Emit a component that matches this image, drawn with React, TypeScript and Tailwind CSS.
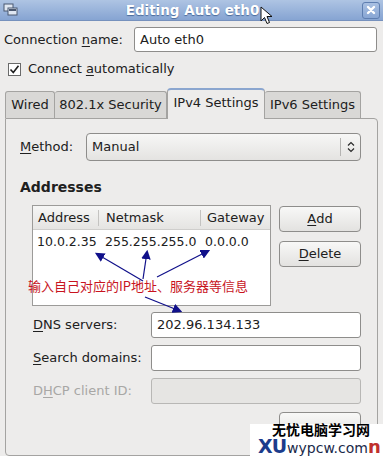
import React from "react";

const font = { fontFamily: '"DejaVu Sans", "Noto Sans CJK SC", sans-serif' };

function Input({ value, disabled }: { value?: string; disabled?: boolean }) {
  return (
    <div
      className={
        "h-full w-full rounded-[3px] border px-[5px] flex items-center " +
        (disabled ? "bg-[#e6e5e3] border-[#b8b7b5]" : "bg-white border-[#8e8d8b]")
      }
    >
      {value}
    </div>
  );
}

function U({ children }: { children: React.ReactNode }) {
  return <span className="underline underline-offset-2">{children}</span>;
}

export default function App() {
  return (
    <div
      className="relative w-[383px] h-[456px] overflow-hidden bg-[#edeceb] text-[13px] text-[#202020]"
      style={font}
    >
      {/* title bar */}
      <div className="h-[21px] flex items-center bg-gradient-to-b from-[#aec4e3] to-[#86a4d2] border-b border-[#7691bd] px-[3px]">
        <svg width="16" height="14" viewBox="0 0 16 14">
          <rect x="1" y="1" width="9" height="7" fill="#dfe7f2" stroke="#4a5870" />
          <rect x="5" y="5" width="9" height="7" fill="#dfe7f2" stroke="#4a5870" />
          <rect x="6" y="6" width="7" height="2" fill="#4a5870" />
        </svg>
        <div className="flex-1 text-center text-white font-bold text-[13.5px] [text-shadow:0_1px_1px_#4a6a9a] pl-[4px]">
          Editing Auto eth0
        </div>
        <div className="w-[18px] h-[17px] rounded-[3px] border border-[#5e7eb0] bg-gradient-to-b from-[#a9c0e2] to-[#88a6d4] flex items-center justify-center">
          <svg width="10" height="10" viewBox="0 0 10 10">
            <path d="M2 2 L8 8 M8 2 L2 8" stroke="white" strokeWidth="2.4" strokeLinecap="round" />
          </svg>
        </div>
      </div>

      {/* mouse pointer */}
      <svg className="absolute left-[260px] top-[6px]" width="14" height="20" viewBox="0 0 14 20">
        <path d="M1 1 L1 15 L4.5 11.5 L7 17.5 L9.5 16.5 L7 10.5 L12 10.5 Z" fill="white" stroke="#111" strokeWidth="1" strokeLinejoin="round" />
      </svg>

      <div className="px-[4px]">
        {/* connection name */}
        <div className="flex items-center mt-[6px] h-[25px]">
          <span className="w-[130px]">
            Connection <U>n</U>ame:
          </span>
          <div className="w-[243px] h-[25px]">
            <Input value="Auto eth0" />
          </div>
        </div>

        {/* connect automatically */}
        <div className="flex items-center mt-[9px] pl-[4px] gap-[7px] h-[16px]">
          <div className="w-[13px] h-[13px] border border-[#6a6a6a] bg-white flex items-center justify-center">
            <svg width="11" height="11" viewBox="0 0 11 11">
              <path d="M1.5 5.5 L4.3 8.6 L9.5 1.8" stroke="#1e1e1e" strokeWidth="1.6" fill="none" />
            </svg>
          </div>
          <span>
            Connect <U>a</U>utomatically
          </span>
        </div>

        {/* tabs */}
        <div className="flex items-end mt-[10px] pl-[1px] h-[31px]">
          <div className="w-[50px] h-[27px] bg-[#d9d8d6] border border-b-0 border-[#a4a3a1] rounded-t-[3px] flex items-center justify-center">
            Wired
          </div>
          <div className="w-[112px] h-[27px] bg-[#d9d8d6] border border-b-0 border-l-0 border-[#a4a3a1] rounded-t-[3px] flex items-center justify-center">
            802.1x Security
          </div>
          <div className="relative z-10 w-[98px] h-[31px] bg-[#edeceb] border border-b-0 border-[#a4a3a1] border-t-[#8ba6cf] border-t-2 rounded-t-[4px] flex items-center justify-center -mb-px pb-[3px]">
            IPv4 Settings
          </div>
          <div className="w-[96px] h-[27px] bg-[#d9d8d6] border border-b-0 border-l-0 border-[#a4a3a1] rounded-t-[3px] flex items-center justify-center">
            IPv6 Settings
          </div>
        </div>

        {/* panel */}
        <div className="relative ml-[1px] w-[373px] h-[338px] border border-[#a4a3a1] rounded-b-[4px] rounded-tr-[4px] pl-[14px] pr-[16px]">
          {/* method */}
          <div className="flex items-center mt-[14px] h-[28px]">
            <span className="w-[66px]">
              <U>M</U>ethod:
            </span>
            <div className="flex-1 h-[28px] rounded-[4px] border border-[#8e8d8b] bg-gradient-to-b from-[#f7f7f6] to-[#e4e3e1] flex items-center">
              <span className="flex-1 pl-[5px]">Manual</span>
              <div className="w-px h-[18px] bg-[#b5b4b2]" />
              <div className="w-[19px] flex justify-center">
                <svg width="8" height="12" viewBox="0 0 8 12">
                  <path d="M1 4.5 L4 1.5 L7 4.5 M1 7.5 L4 10.5 L7 7.5" stroke="#2a2a2a" strokeWidth="1.2" fill="none" />
                </svg>
              </div>
            </div>
          </div>

          {/* addresses */}
          <div className="mt-[18px] font-bold text-[14px] leading-[17px]">Addresses</div>
          <div className="flex mt-[9px] pl-[12px] gap-[8px]">
            <div className="w-[239px] h-[101px] border border-[#9c9b99] bg-white">
              <div className="flex h-[24px] items-center bg-gradient-to-b from-[#f6f6f5] to-[#e5e4e2] border-b border-[#cfcecc]">
                <div className="w-[65px] pl-[5px]">Address</div>
                <div className="w-px h-[16px] bg-[#c4c3c1]" />
                <div className="w-[101px] pl-[7px]">Netmask</div>
                <div className="w-px h-[16px] bg-[#c4c3c1]" />
                <div className="flex-1 pl-[6px]">Gateway</div>
              </div>
              <div className="flex mt-[3px] text-[12.5px] whitespace-nowrap">
                <div className="w-[72px] pl-[4px]">10.0.2.35</div>
                <div className="w-[100px]">255.255.255.0</div>
                <div>0.0.0.0</div>
              </div>
            </div>
            <div className="flex flex-col gap-[9px] pt-[1px]">
              <div className="w-[82px] h-[26px] rounded-[4px] border border-[#8e8d8b] bg-gradient-to-b from-[#f8f8f7] to-[#e3e2e0] flex items-center justify-center">
                <U>A</U>dd
              </div>
              <div className="w-[82px] h-[26px] rounded-[4px] border border-[#8e8d8b] bg-gradient-to-b from-[#f8f8f7] to-[#e3e2e0] flex items-center justify-center">
                <span>
                  <U>D</U>elete
                </span>
              </div>
            </div>
          </div>

          {/* dns etc */}
          <div className="flex flex-col gap-[7px] mt-[6px] pl-[13px]">
            <div className="flex items-center h-[26px]">
              <span className="w-[118px]">
                <U>D</U>NS servers:
              </span>
              <div className="w-[210px] h-[26px]">
                <Input value="202.96.134.133" />
              </div>
            </div>
            <div className="flex items-center h-[26px]">
              <span className="w-[118px]">
                <U>S</U>earch domains:
              </span>
              <div className="w-[210px] h-[26px]">
                <Input />
              </div>
            </div>
            <div className="flex items-center h-[26px] text-[#a8a7a5]">
              <span className="w-[118px]">
                D<U>H</U>CP client ID:
              </span>
              <div className="w-[210px] h-[26px]">
                <Input disabled />
              </div>
            </div>
          </div>
          <div className="flex justify-end mt-[8px]">
            <div className="w-[82px] h-[26px] rounded-[4px] border border-[#8e8d8b] bg-gradient-to-b from-[#f8f8f7] to-[#e3e2e0]" />
          </div>
        </div>
      </div>

      {/* annotation */}
      <div
        className="absolute left-[28px] top-[278px] text-[13px] text-[#c8141e] leading-[16px]"
        style={{ fontFamily: '"Noto Sans CJK SC", sans-serif' }}
      >
        输入自己对应的IP地址、服务器等信息
      </div>
      <svg className="absolute left-0 top-0 pointer-events-none" width="383" height="456">
        <defs>
          <marker id="ah" markerWidth="8" markerHeight="8" refX="6" refY="4" orient="auto">
            <path d="M0 0 L8 4 L0 8 Z" fill="#10108a" />
          </marker>
        </defs>
        <g stroke="#10108a" strokeWidth="1.2" fill="none" markerEnd="url(#ah)">
          <line x1="143" y1="281" x2="97" y2="254" />
          <line x1="143" y1="279" x2="147" y2="252" />
          <line x1="157" y1="277" x2="208" y2="251" />
          <line x1="145" y1="297" x2="180" y2="311" />
        </g>
      </svg>

      {/* watermark */}
      <div className="absolute left-[250px] top-[424px] w-[133px] h-[32px] bg-white" />
      <div
        className="absolute left-[272px] top-[421px] text-[14px] font-bold text-black leading-[16px]"
        style={{ fontFamily: '"Noto Sans CJK SC", sans-serif' }}
      >
        无忧电脑学习网
      </div>
      <div
        className="absolute left-[258px] top-[438px] flex items-baseline leading-[17px] whitespace-nowrap"
        style={{ fontFamily: '"DejaVu Sans", sans-serif' }}
      >
        <span className="text-[19px] font-bold text-[#1c3c8c] tracking-[-1px]">XU</span>
        <span className="text-[14px] text-[#1a2a4a] ml-[1px]">wypcw.com</span>
        <span className="text-[18px] font-bold text-[#c0302c]">n</span>
      </div>
    </div>
  );
}
